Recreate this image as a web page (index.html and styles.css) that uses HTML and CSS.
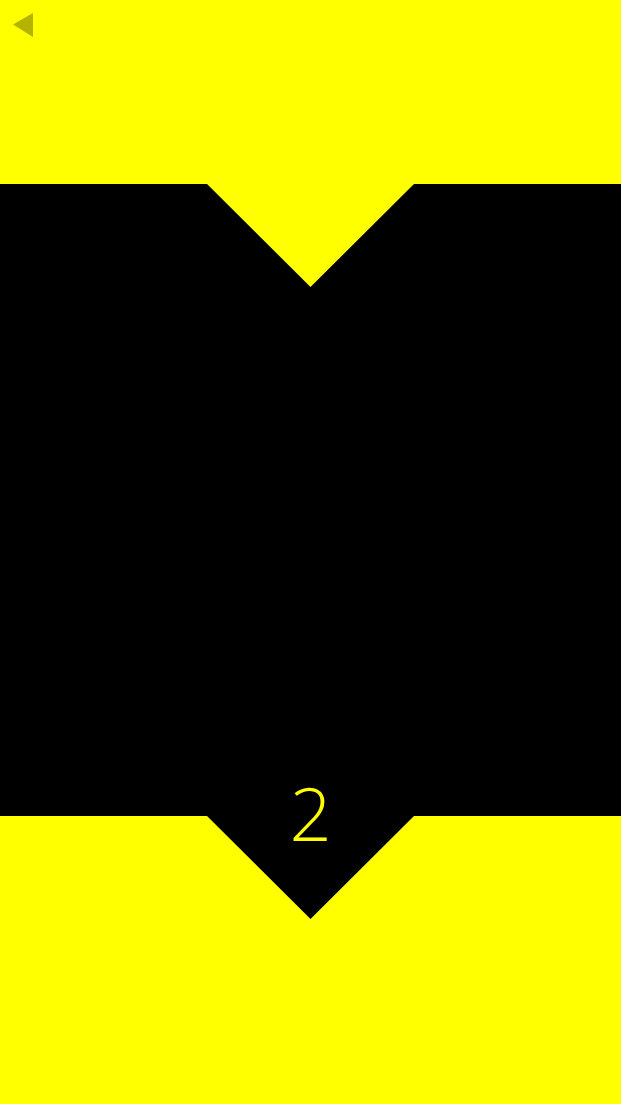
FILE: index.html
```html
<!DOCTYPE html>
<html>
<head>
<meta charset="utf-8">
<link rel="stylesheet" href="styles.css">
</head>
<body>
<div class="screen">
  <header class="top">
    <svg class="back" width="40" height="40" viewBox="0 0 40 40"><polygon points="13,24.5 33,13 33,37" fill="#b3b300"/></svg>
  </header>
  <main class="panel">
    <div class="count">2</div>
  </main>
  <footer class="bottom"></footer>
</div>
</body>
</html>
```
FILE: styles.css
```css
html, body {
  margin: 0;
  padding: 0;
  background: #ffff00;
}
.screen {
  width: 621px;
  height: 1104px;
  display: flex;
  flex-direction: column;
  overflow: hidden;
}
.top {
  height: 184px;
  flex: none;
}
.back {
  display: block;
}
.panel {
  height: 735px;
  flex: none;
  background: #000;
  clip-path: polygon(0 0, 207px 0, 310.5px 103px, 414px 0, 100% 0, 100% 632px, 414px 632px, 310.5px 735px, 207px 632px, 0 632px);
  display: flex;
  flex-direction: column;
  justify-content: flex-end;
  align-items: center;
}
.count {
  font-family: "Open Sans", "Noto Sans", sans-serif;
  font-weight: 300;
  font-size: 74px;
  line-height: 74px;
  color: #ffff00;
  margin-bottom: 69px;
}
.bottom {
  flex: 1;
}
```
